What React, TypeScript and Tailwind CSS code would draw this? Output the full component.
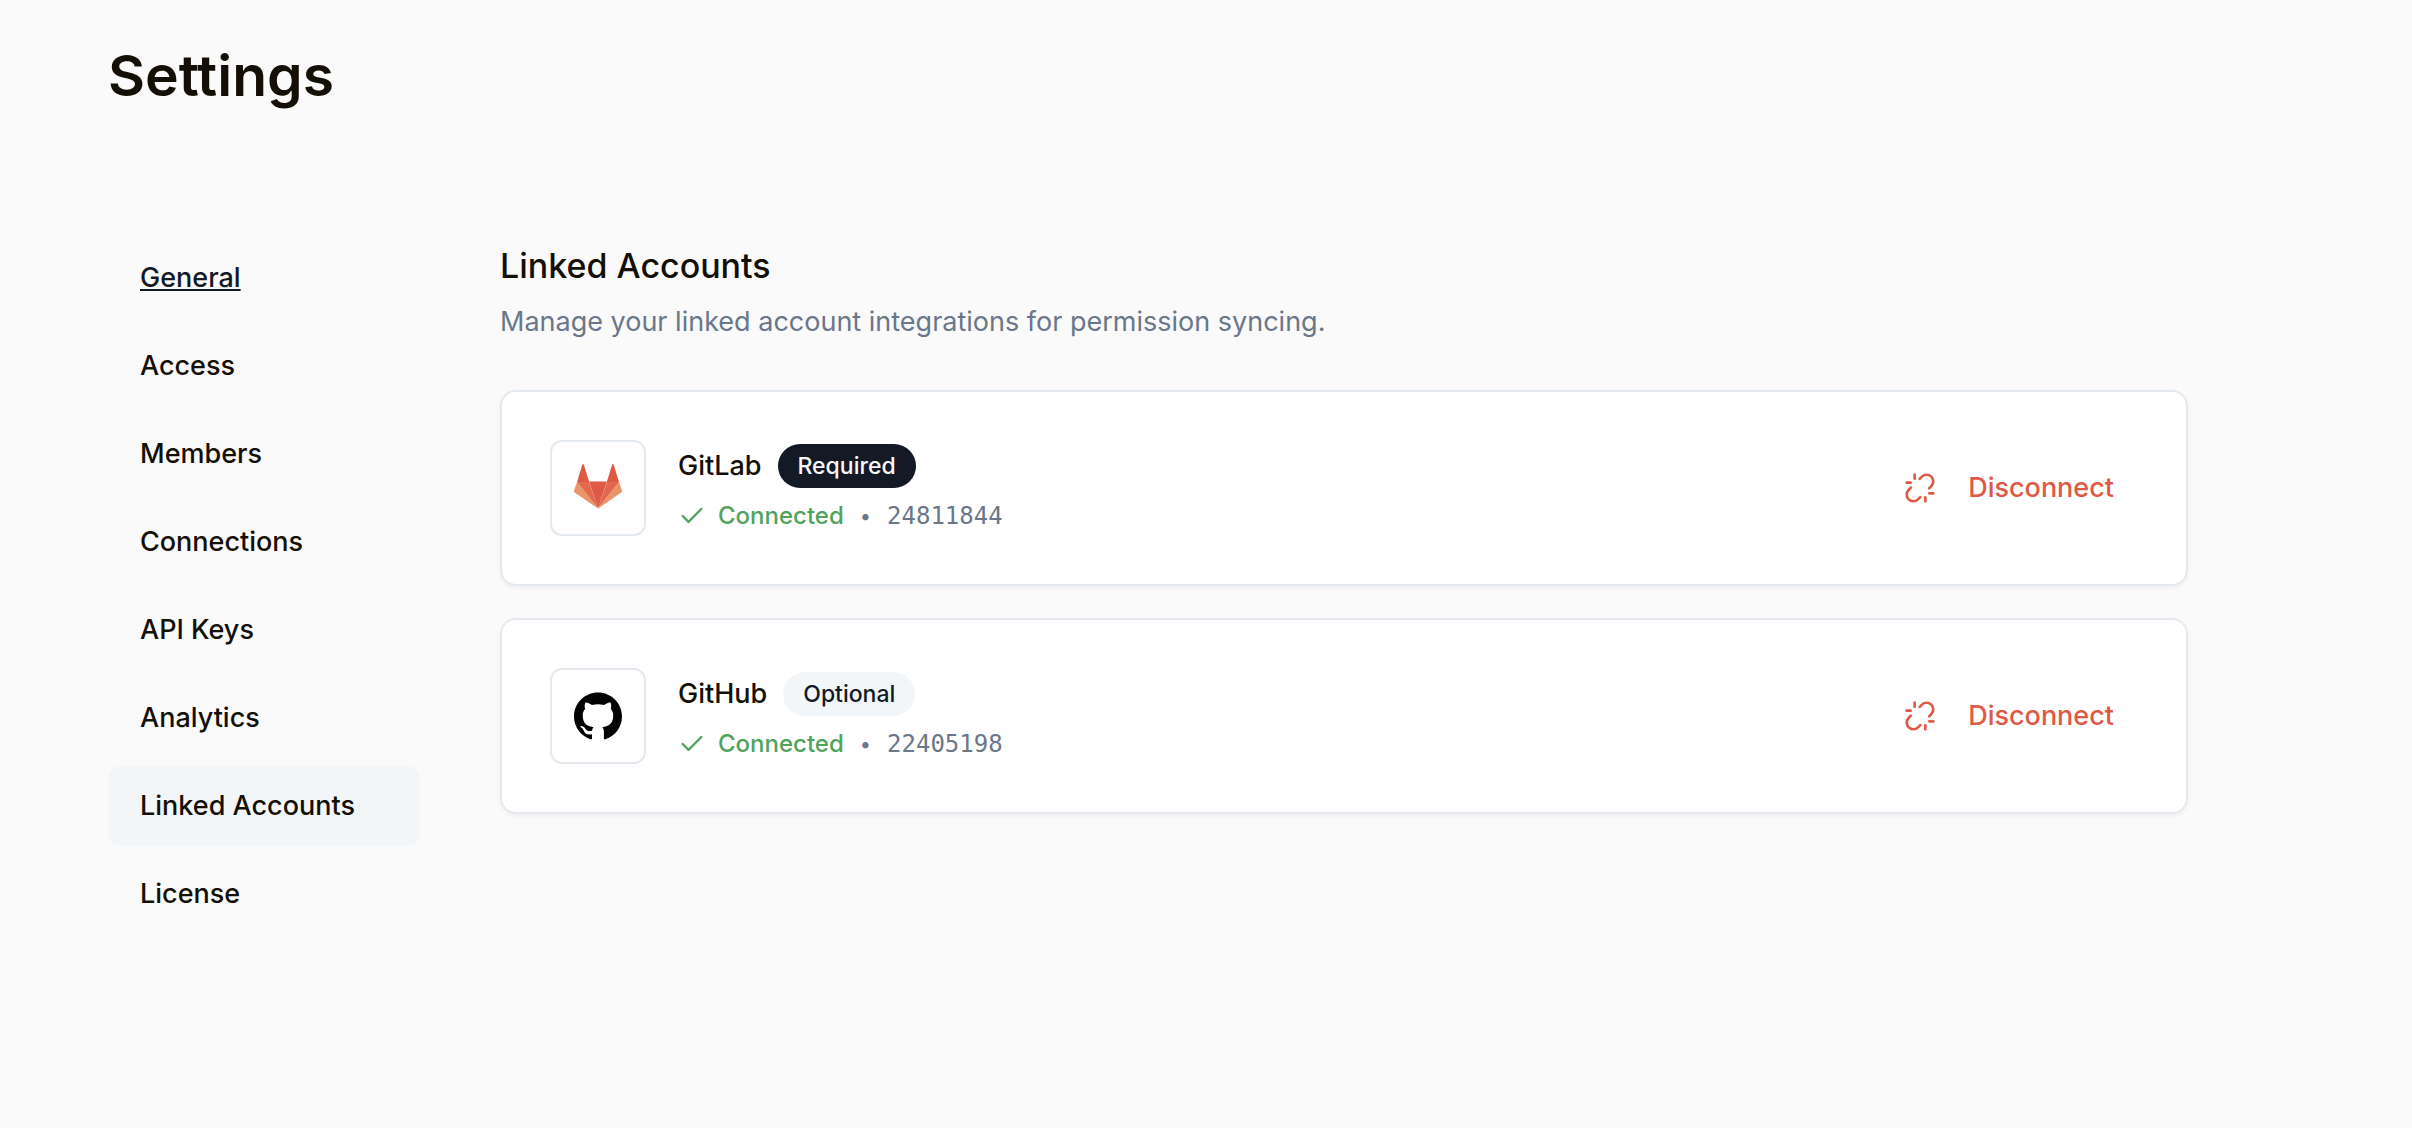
import React from 'react';
import { Check, Unlink } from 'lucide-react';
import { SiGithub } from 'react-icons/si';
import { clsx } from 'clsx';

interface LinkedAccount {
  name: string;
  accountId: string;
  required: boolean;
  icon: React.ReactNode;
}

const navItems = [
  'General',
  'Access',
  'Members',
  'Connections',
  'API Keys',
  'Analytics',
  'Linked Accounts',
  'License',
];

const GitLabLogo = () => (
  <svg viewBox="0 0 48 48" className="size-12" aria-hidden="true">
    <path d="M3 18 0 26.4c-.2.8 0 1.5.7 2L24 44.5z" fill="#eb9468" />
    <path d="m45 18 3 8.4c.2.8 0 1.5-.7 2L24 44.5z" fill="#eb9468" />
    <path d="M3 18h12l9 26.5z" fill="#e4694c" />
    <path d="M45 18H33l-9 26.5z" fill="#e4694c" />
    <path d="M15 17.5h18l-9 27z" fill="#de5946" />
    <path d="M3 18 8.4.6c.2-.8 1.1-.8 1.4 0L15.2 18z" fill="#de5946" />
    <path d="M45 18 39.6.6c-.2-.8-1.1-.8-1.4 0L32.800 18z" fill="#de5946" />
  </svg>
);

const accounts: LinkedAccount[] = [
  { name: 'GitLab', accountId: '24811844', required: true, icon: <GitLabLogo /> },
  {
    name: 'GitHub',
    accountId: '22405198',
    required: false,
    icon: <SiGithub className="size-12 text-black" />,
  },
];

const AccountCard: React.FC<{ account: LinkedAccount }> = ({ account }) => {
  return (
    <li className="flex items-center justify-between rounded-2xl border-2 border-[#e4e9f0] bg-white p-12 shadow-[0_2px_4px_rgba(0,0,0,0.05)]">
      <div className="flex items-center gap-8">
        <div className="flex size-24 items-center justify-center rounded-xl border-2 border-[#e4e9f0]">
          {account.icon}
        </div>
        <div className="flex flex-col gap-3">
          <div className="flex items-center gap-4">
            <h3 className="text-[27px] leading-10 font-medium">{account.name}</h3>
            <span
              className={clsx(
                'rounded-full px-5 text-[23px] leading-[44px] font-medium',
                account.required ? 'bg-[#141926] text-[#f8fafc]' : 'bg-[#f2f6f9] text-[#141926]'
              )}
            >
              {account.required ? 'Required' : 'Optional'}
            </span>
          </div>
          <div className="flex items-center gap-4 text-2xl text-[#6a778a]">
            <span className="flex items-center gap-3 font-medium text-[#51a35c]">
              <Check className="size-7" />
              Connected
            </span>
            <span className="text-xl">•</span>
            <span className="font-['DejaVu_Sans_Mono',monospace]">{account.accountId}</span>
          </div>
        </div>
      </div>
      <button
        type="button"
        className="flex h-16 items-center gap-8 rounded-xl px-6 text-[27px] font-medium text-[#de5946]"
      >
        <Unlink className="size-8" />
        Disconnect
      </button>
    </li>
  );
};

const App: React.FC = () => {
  return (
    <div className="min-h-screen bg-[#fafafa] pt-10 pr-56 pb-20 pl-[108px] font-[Inter,sans-serif] text-[#140f06]">
      <h1 className="text-[57px] leading-[72px] font-semibold">Settings</h1>

      <div className="mt-[126px] flex gap-20">
        <nav className="flex w-[312px] shrink-0 flex-col gap-2">
          {navItems.map((item) => (
            <a
              key={item}
              href="#"
              className={clsx(
                'rounded-xl px-8 py-5 text-[27px] leading-10 font-medium',
                item === 'Linked Accounts' && 'bg-[#f2f6f9]',
                item === 'General' && 'text-[#141926] underline'
              )}
            >
              {item}
            </a>
          ))}
        </nav>

        <main className="min-w-0 flex-1">
          <h2 className="text-[34px] leading-14 font-medium">Linked Accounts</h2>
          <p className="mt-2 text-[27px] leading-10 text-[#6a778a]">
            Manage your linked account integrations for permission syncing.
          </p>

          <ul className="mt-12 flex flex-col gap-8">
            {accounts.map((account) => (
              <AccountCard key={account.name} account={account} />
            ))}
          </ul>
        </main>
      </div>
    </div>
  );
};

export default App;
